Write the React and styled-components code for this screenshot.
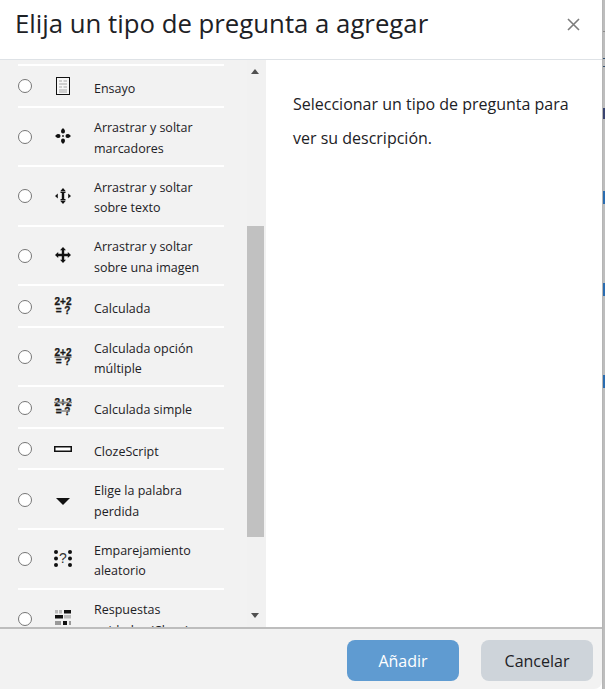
import React from "react";
import styled, { createGlobalStyle } from "styled-components";

const GlobalStyle = createGlobalStyle`
  html, body { margin: 0; padding: 0; background: #fff; }
  body { font-family: "Open Sans", "Noto Sans", sans-serif; color: #1d2125; overflow: hidden; }
  * { box-sizing: border-box; }
`;

const Page = styled.div`
  width: 605px;
  height: 689px;
  display: flex;
  overflow: hidden;
`;

const Dialog = styled.div`
  width: 602px;
  height: 689px;
  display: flex;
  flex-direction: column;
  background: #fff;
  border-radius: 0 0 8px 0;
`;

const Edge = styled.div`
  width: 3px;
  height: 689px;
  border-left: 1px solid #b5b5b5;
  background: linear-gradient(
    to bottom,
    #bdbdbd 0 31px, #8a8a8a 31px 32px, #bdbdbd 32px 58px, #33506f 58px 59px,
    #bdbdbd 59px 66px, #33506f 66px 67px, #bdbdbd 67px 108px, #3a4470 108px 119px,
    #bdbdbd 119px 191px, #2a6cb0 191px 204px, #bdbdbd 204px 283px,
    #2a6cb0 283px 296px, #bdbdbd 296px 375px, #2a6cb0 375px 388px, #bdbdbd 388px
  );
`;

const Header = styled.header`
  height: 60px;
  flex: none;
  display: flex;
  align-items: center;
  justify-content: space-between;
  padding: 0 22px 13px 15px;
  border-bottom: 1px solid #dee2e6;
`;

const Title = styled.h1`
  margin: 0;
  font-size: 25.75px;
  font-weight: 400;
  line-height: 38px;
`;

const Close = styled.button`
  border: 0;
  padding: 0;
  background: none;
  display: flex;
  color: #7c7c7c;
  margin-top: 3px;
`;

const Body = styled.div`
  flex: 1;
  min-height: 0;
  display: flex;
`;

const ListPane = styled.div`
  position: relative;
  width: 266px;
  flex: none;
  background: #f2f2f2;
  overflow: hidden;
`;

const List = styled.div`
  padding: 4px 42px 0 18px;
`;

const Row = styled.label`
  display: flex;
  align-items: center;
  height: ${(p) => (p.$tall ? "59.6px" : "41.5px")};
  border-top: 2px solid #fff;
  font-size: 12.5px;
  line-height: 20.5px;
`;

const Radio = styled.span`
  width: 14px;
  height: 14px;
  flex: none;
  margin-top: 1px;
  border: 1px solid #767676;
  border-radius: 50%;
  background: #fff;
`;

const IconSlot = styled.span`
  width: 24px;
  height: 24px;
  flex: none;
  margin: 0 19px 0 19px;
  display: flex;
  align-items: center;
  justify-content: center;
`;

const RowLabel = styled.span`
  margin-top: ${(p) => (p.$tall ? "5px" : "7px")};
`;

const Scrollbar = styled.div`
  position: absolute;
  top: 0;
  right: 0;
  bottom: 0;
  width: 19px;
  background: #f1f1f1;
`;

const Thumb = styled.div`
  position: absolute;
  top: 166px;
  left: 0;
  width: 17px;
  height: 311px;
  background: #c1c1c1;
`;

const Arrow = styled.div`
  position: absolute;
  left: 4px;
  width: 0;
  height: 0;
  border-left: 4.5px solid transparent;
  border-right: 4.5px solid transparent;
  ${(p) =>
    p.$down
      ? "bottom: 9px; border-top: 5px solid #505050;"
      : "top: 9px; border-bottom: 5px solid #505050;"}
`;

const Description = styled.div`
  flex: 1;
  padding: 27px 20px 0 27px;
  font-size: 16px;
  line-height: 34px;
`;

const Footer = styled.footer`
  height: 62px;
  flex: none;
  display: flex;
  justify-content: flex-end;
  align-items: flex-start;
  gap: 22px;
  padding: 11px 9px 0 0;
  background: #f2f2f2;
  border-top: 2px solid #bdbdbd;
  border-radius: 0 0 8px 0;
`;

const Button = styled.button`
  width: 112px;
  height: 41px;
  border: 0;
  border-radius: 8px;
  font: 400 16px "Open Sans", "Noto Sans", sans-serif;
  color: ${(p) => (p.$primary ? "#fff" : "#1d2125")};
  background: ${(p) => (p.$primary ? "#5f9bd1" : "#ced4da")};
`;

const Mono = styled.svg`
  display: block;
  fill: #111;
`;

const Essay = () => (
  <Mono width="14" height="18" viewBox="0 0 14 18">
    <rect x="0.5" y="0.5" width="13" height="17" fill="#f7f7f7" stroke="#111" />
    <path d="M3 4h3M7.500 4h3.500M3 7h8M3 10h3M7.500 10h3.500M3 13h8M3 15h8" stroke="#a8a8a8" strokeWidth="1.2" />
  </Mono>
);

const dot = (x, y, r = 2) => <circle cx={x} cy={y} r={r} />;

const Markers = () => (
  <Mono width="16" height="16" viewBox="0 0 16 16">
    <path d="M8 0l2.200 2.600H5.800zM8 16l-2.200-2.600h4.400zM0 8l2.600-2.200v4.400zM16 8l-2.600 2.200V5.800z" />
    {dot(8, 3.5)}{dot(8, 12.5)}{dot(3.5, 8)}{dot(12.5, 8)}
    {dot(8, 8, 0.9)}
  </Mono>
);

const TextDrag = () => (
  <Mono width="16" height="16" viewBox="0 0 16 16">
    <path d="M8 0l2.600 3H5.400zM8 16l-2.600-3h5.200zM0 8l2.800-2.400v4.800zM16 8l-2.800 2.400V5.600z" />
    <path d="M5.500 3.500h5v1.600H9.200v5.800h1.300v1.600h-5v-1.600h1.300V5.100H5.500z" />
  </Mono>
);

const ImageDrag = () => (
  <Mono width="16" height="16" viewBox="0 0 16 16">
    <path d="M8 0l3 3.200H9.200v3.600h3.600V5L16 8l-3.200 3V9.200H9.200v3.600H11L8 16l-3-3.200h1.800V9.200H3.200V11L0 8l3.200-3v1.800h3.600V3.200H5z" />
  </Mono>
);

const Formula = styled.svg`
  display: block;
  font-family: "Liberation Sans", Arial, sans-serif;
  font-weight: 700;
  font-size: 10px;
  fill: #1a1a1a;
`;

const Calc = ({ bar, smudge }) => (
  <Formula width="18" height="18" viewBox="0 0 18 18">
    <text x="9" y="8" textAnchor="middle" textLength="17" stroke="#1a1a1a" strokeWidth="0.3">2+2</text>
    <text x="9" y="17" textAnchor="middle" stroke="#1a1a1a" strokeWidth="0.3">{"=\u00a0?"}</text>
    {bar && <rect x="0.5" y="8.5" width="17" height="1.2" fill="#555" />}
    {smudge && <path d="M0 4.500h18M2 13h14" stroke="#888" strokeWidth="1.5" />}
  </Formula>
);

const Cloze = () => (
  <Mono width="18" height="6" viewBox="0 0 18 6">
    <rect x="0.75" y="0.75" width="16.5" height="4.5" fill="#fff" stroke="#111" strokeWidth="1.5" />
  </Mono>
);

const Dropdown = () => (
  <Mono width="14" height="7" viewBox="0 0 14 7" style={{ marginTop: 4 }}>
    <path d="M0 0h14L7 7z" />
  </Mono>
);

const RandomMatch = () => (
  <Mono width="18" height="17" viewBox="0 0 18 17">
    {dot(2, 2)}{dot(2, 8.5)}{dot(2, 15)}{dot(16, 2)}{dot(16, 8.5)}{dot(16, 15)}
    <text x="9" y="13" textAnchor="middle" fontSize="14" fontFamily="Liberation Sans, sans-serif" fill="#333">?</text>
  </Mono>
);

const Nested = () => (
  <Mono width="16" height="18" viewBox="0 0 16 18" style={{ marginTop: 2 }}>
    <rect x="0" y="0" width="3" height="3.500" fill="#bbb" />
    <rect x="4" y="0" width="3" height="3.500" fill="#bbb" />
    <rect x="9" y="0" width="7" height="3.500" />
    <rect x="0" y="5" width="8" height="3.500" />
    <rect x="9" y="5" width="7" height="3.500" fill="#bbb" />
    <rect x="0" y="11" width="6" height="4" fill="#999" />
    <rect x="8" y="11" width="4" height="4" />
    <rect x="14" y="11" width="2" height="4" fill="#999" />
  </Mono>
);

const questionTypes = [
  { name: ["Ensayo"], icon: <Essay /> },
  { name: ["Arrastrar y soltar", "marcadores"], icon: <Markers /> },
  { name: ["Arrastrar y soltar", "sobre texto"], icon: <TextDrag /> },
  { name: ["Arrastrar y soltar", "sobre una imagen"], icon: <ImageDrag /> },
  { name: ["Calculada"], icon: <Calc /> },
  { name: ["Calculada opción", "múltiple"], icon: <Calc bar /> },
  { name: ["Calculada simple"], icon: <Calc smudge /> },
  { name: ["ClozeScript"], icon: <Cloze /> },
  { name: ["Elige la palabra", "perdida"], icon: <Dropdown /> },
  { name: ["Emparejamiento", "aleatorio"], icon: <RandomMatch /> },
  { name: ["Respuestas", "anidadas (Cloze)"], icon: <Nested /> },
];

export default function App() {
  return (
    <Page>
      <GlobalStyle />
      <Dialog>
        <Header>
          <Title>Elija un tipo de pregunta a agregar</Title>
          <Close aria-label="Cerrar">
            <svg width="13" height="13" viewBox="0 0 13 13">
              <path d="M1 1l11 11M12 1L1 12" stroke="currentColor" strokeWidth="1.6" />
            </svg>
          </Close>
        </Header>
        <Body>
          <ListPane>
            <List>
              {questionTypes.map((q) => {
                const tall = q.name.length > 1;
                return (
                  <Row key={q.name[0] + q.name.length} $tall={tall}>
                    <Radio />
                    <IconSlot>{q.icon}</IconSlot>
                    <RowLabel $tall={tall}>
                      {q.name[0]}
                      {q.name[1] && <br />}
                      {q.name[1]}
                    </RowLabel>
                  </Row>
                );
              })}
            </List>
            <Scrollbar>
              <Arrow />
              <Thumb />
              <Arrow $down />
            </Scrollbar>
          </ListPane>
          <Description>
            Seleccionar un tipo de pregunta para ver su descripción.
          </Description>
        </Body>
        <Footer>
          <Button $primary>Añadir</Button>
          <Button>Cancelar</Button>
        </Footer>
      </Dialog>
      <Edge />
    </Page>
  );
}
